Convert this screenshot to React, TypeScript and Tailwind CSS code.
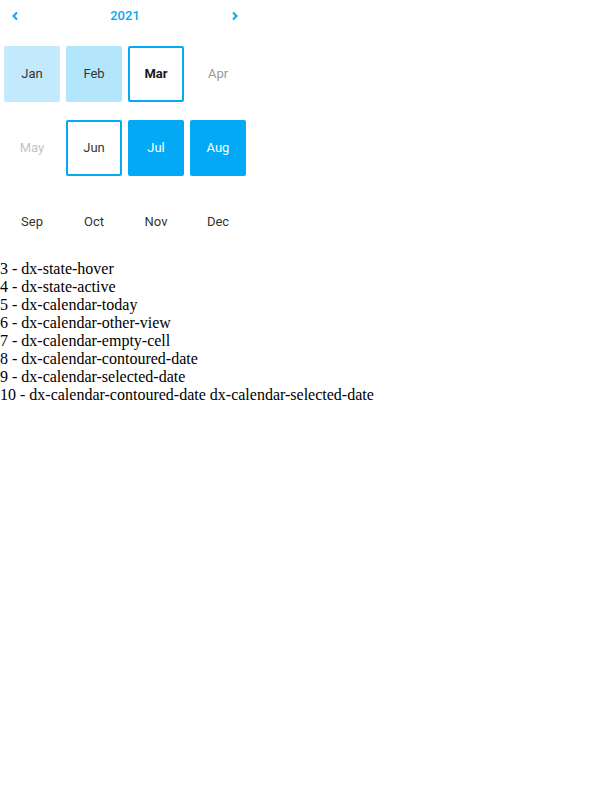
const months = [
  { name: "Jan", cls: "bg-[#c2eafc] text-[#333]" },
  { name: "Feb", cls: "bg-[#b3e5fc] text-[#333]" },
  { name: "Mar", cls: "border-2 border-[#03a9f4] font-bold text-[#1a1a1a]" },
  { name: "Apr", cls: "text-[#999]" },
  { name: "May", cls: "text-[#c4c4c4]" },
  { name: "Jun", cls: "border-2 border-[#03a9f4] text-[#333]" },
  { name: "Jul", cls: "bg-[#03a9f4] text-white" },
  { name: "Aug", cls: "bg-[#03a9f4] text-white" },
  { name: "Sep", cls: "text-[#333]" },
  { name: "Oct", cls: "text-[#333]" },
  { name: "Nov", cls: "text-[#333]" },
  { name: "Dec", cls: "text-[#333]" },
];

const legend = [
  "3 - dx-state-hover",
  "4 - dx-state-active",
  "5 - dx-calendar-today",
  "6 - dx-calendar-other-view",
  "7 - dx-calendar-empty-cell",
  "8 - dx-calendar-contoured-date",
  "9 - dx-calendar-selected-date",
  "10 - dx-calendar-contoured-date dx-calendar-selected-date",
];

const Chevron = ({ dir }: { dir: "left" | "right" }) => (
  <svg width="8" height="10" viewBox="0 0 8 10" fill="none">
    <path
      d={dir === "left" ? "M6 1.5 2.5 5 6 8.5" : "M2 1.5 5.5 5 2 8.5"}
      stroke="#03a9f4"
      strokeWidth="2"
    />
  </svg>
);

export default function App() {
  return (
    <div className="bg-white min-h-[800px]">
      <div className="w-[250px] font-['Roboto',sans-serif] text-[13px]">
        <div className="h-[32px] flex items-center justify-between px-[10px]">
          <button className="w-[10px] h-[16px] flex items-center justify-center">
            <Chevron dir="left" />
          </button>
          <span className="text-[#03a9f4] font-medium text-[13px]">2021</span>
          <button className="w-[10px] h-[16px] flex items-center justify-center">
            <Chevron dir="right" />
          </button>
        </div>
        <div className="grid grid-cols-[repeat(4,56px)] gap-x-[6px] gap-y-[18px] pl-[4px] pt-[14px] pb-[10px]">
          {months.map((m) => (
            <div
              key={m.name}
              className={`h-[56px] rounded-[2px] flex items-center justify-center ${m.cls}`}
            >
              {m.name}
            </div>
          ))}
        </div>
      </div>
      <div className="font-['Liberation_Serif',serif] text-[16px] leading-[18px] text-black">
        {legend.map((l) => (
          <div key={l}>{l}</div>
        ))}
      </div>
    </div>
  );
}
